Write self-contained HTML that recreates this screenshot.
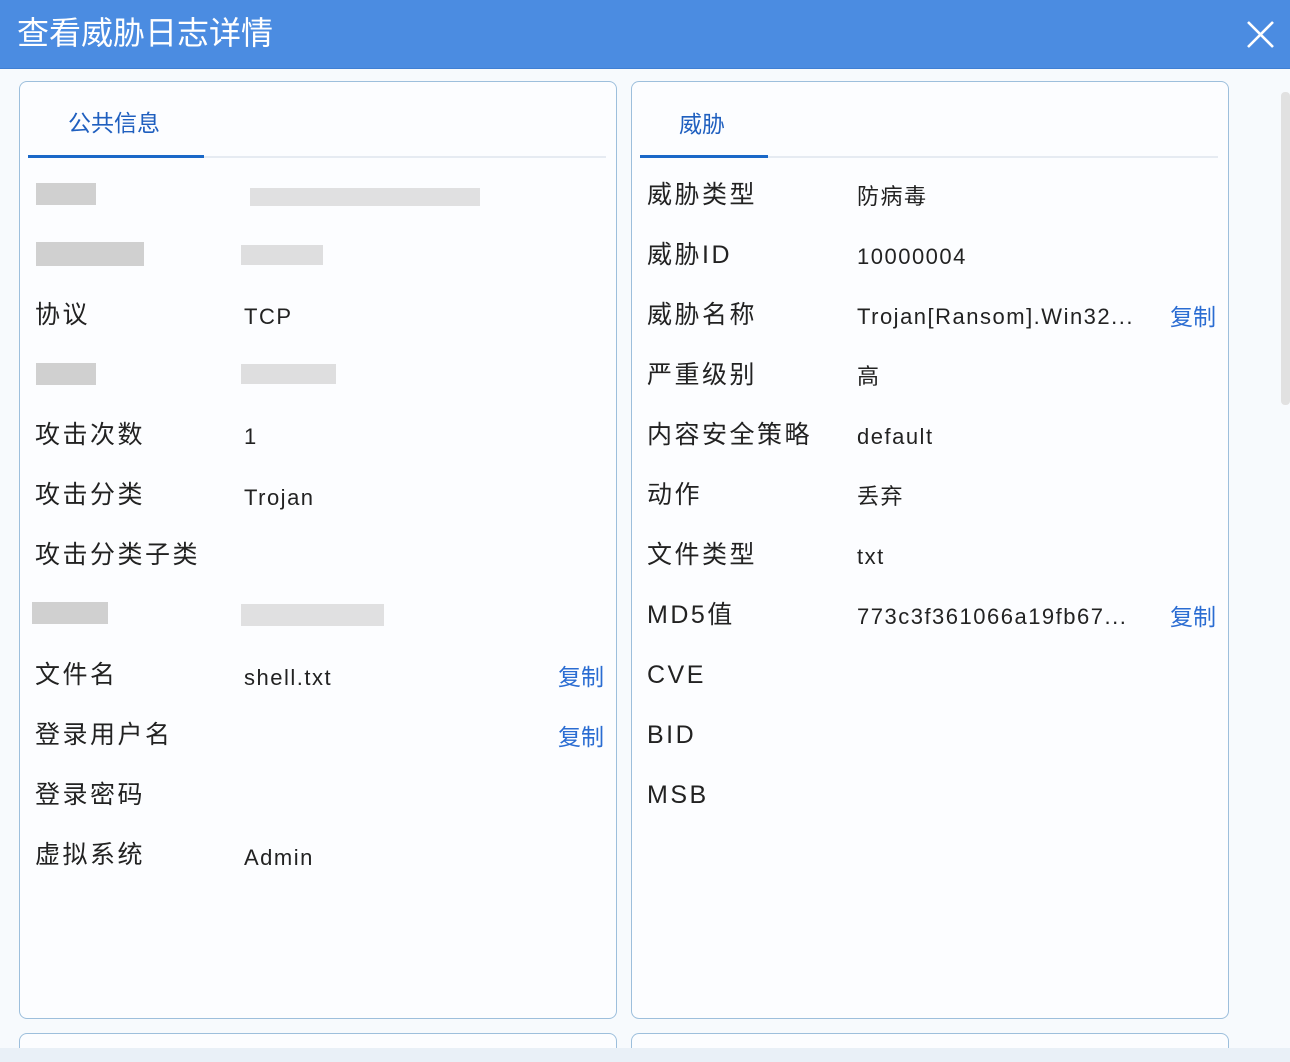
<!DOCTYPE html>
<html><head><meta charset="utf-8"><style>
*{margin:0;padding:0;box-sizing:border-box}
html,body{width:1290px;height:1062px;overflow:hidden}
body{background:#f7fafd;font-family:"Liberation Sans","Noto Sans CJK SC",sans-serif;position:relative;color:#222}
.hdr{position:absolute;left:0;top:0;width:1290px;height:69px;background:#4b8ce1;border-bottom:1px solid #3f7fd3}
.hdr .t{position:absolute;left:17px;top:8px;font-size:32px;color:#fff;letter-spacing:0}
.panel{position:absolute;border:1.5px solid #9dbfdc;border-radius:8px;background:#fcfdff}
.tabline{position:absolute;height:2px;background:#e6ebf2}
.tabu{position:absolute;height:3px;background:#1a68c8}
.tab{position:absolute;font-size:23px;color:#1f5fbf}
.l,.v,.c{position:absolute;line-height:30px;white-space:nowrap}
.l{font-size:25px;color:#222;letter-spacing:2.5px}
.v{font-size:22px;color:#222;letter-spacing:1.5px}
.c{font-size:23px;color:#2a6cd2}
.blk{position:absolute;background:#c4c4c4;opacity:.8}
.sb{position:absolute;left:1281px;top:92px;width:9px;height:313px;background:#e1e1e1;border-radius:4px}
</style></head><body>
<div class="hdr"><div class="t">查看威胁日志详情</div>
<svg style="position:absolute;left:1246px;top:20px" width="29" height="29" viewBox="0 0 29 29"><path d="M2 2L27 27M27 2L2 27" stroke="#fff" stroke-width="2.6"/></svg></div>
<div class="sb"></div>
<div class="panel" style="left:19px;top:81px;width:598px;height:938px"></div>
<div class="panel" style="left:631px;top:81px;width:598px;height:938px"></div>
<div class="panel" style="left:19px;top:1033px;width:598px;height:28px"></div>
<div class="panel" style="left:631px;top:1033px;width:598px;height:28px"></div>
<div style="position:absolute;left:0;top:1048px;width:1290px;height:14px;background:#e9f0f7;z-index:5"></div>
<div class="tabline" style="left:28px;top:156px;width:578px"></div>
<div class="tabu" style="left:28px;top:155px;width:176px"></div>
<div class="tab" style="left:68px;top:104px">公共信息</div>
<div class="tabline" style="left:640px;top:156px;width:578px"></div>
<div class="tabu" style="left:640px;top:155px;width:128px"></div>
<div class="tab" style="left:679px;top:105px">威胁</div>

<div class="blk" style="left:36px;top:183px;width:60px;height:22px"></div>
<div class="blk" style="left:250px;top:188px;width:230px;height:18px;opacity:.5"></div>
<div class="blk" style="left:36px;top:242px;width:108px;height:24px"></div>
<div class="blk" style="left:241px;top:245px;width:82px;height:20px;opacity:.55"></div>
<div class="l" style="left:35px;top:300px">协议</div><div class="v" style="left:244px;top:302px">TCP</div>
<div class="blk" style="left:36px;top:363px;width:60px;height:22px"></div>
<div class="blk" style="left:241px;top:364px;width:95px;height:20px;opacity:.55"></div>
<div class="l" style="left:35px;top:420px">攻击次数</div><div class="v" style="left:244px;top:422px">1</div>
<div class="l" style="left:35px;top:480px">攻击分类</div><div class="v" style="left:244px;top:483px">Trojan</div>
<div class="l" style="left:35px;top:540px">攻击分类子类</div>
<div class="blk" style="left:32px;top:602px;width:76px;height:22px"></div>
<div class="blk" style="left:241px;top:604px;width:143px;height:22px;opacity:.5"></div>
<div class="l" style="left:35px;top:660px">文件名</div><div class="v" style="left:244px;top:663px">shell.txt</div><div class="c" style="left:558px;top:662px">复制</div>
<div class="l" style="left:35px;top:720px">登录用户名</div><div class="c" style="left:558px;top:722px">复制</div>
<div class="l" style="left:35px;top:780px">登录密码</div>
<div class="l" style="left:35px;top:840px">虚拟系统</div><div class="v" style="left:244px;top:843px">Admin</div>

<div class="l" style="left:647px;top:180px">威胁类型</div><div class="v" style="left:857px;top:182px">防病毒</div>
<div class="l" style="left:647px;top:240px">威胁ID</div><div class="v" style="left:857px;top:242px">10000004</div>
<div class="l" style="left:647px;top:300px">威胁名称</div><div class="v" style="left:857px;top:302px">Trojan[Ransom].Win32...</div><div class="c" style="left:1170px;top:302px">复制</div>
<div class="l" style="left:647px;top:360px">严重级别</div><div class="v" style="left:857px;top:362px">高</div>
<div class="l" style="left:647px;top:420px">内容安全策略</div><div class="v" style="left:857px;top:422px">default</div>
<div class="l" style="left:647px;top:480px">动作</div><div class="v" style="left:857px;top:482px">丢弃</div>
<div class="l" style="left:647px;top:540px">文件类型</div><div class="v" style="left:857px;top:542px">txt</div>
<div class="l" style="left:647px;top:600px">MD5值</div><div class="v" style="left:857px;top:602px">773c3f361066a19fb67...</div><div class="c" style="left:1170px;top:602px">复制</div>
<div class="l" style="left:647px;top:660px">CVE</div>
<div class="l" style="left:647px;top:720px">BID</div>
<div class="l" style="left:647px;top:780px">MSB</div>
</body></html>
